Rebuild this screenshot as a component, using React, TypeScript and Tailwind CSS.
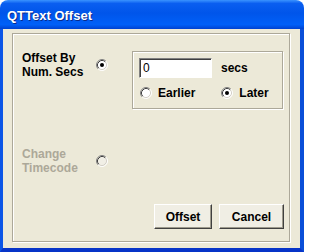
import React from "react";

function Radio({ checked, disabled }: { checked?: boolean; disabled?: boolean }) {
  return (
    <svg width="12" height="12" viewBox="0 0 12 12" className="block shrink-0">
      <circle cx="6" cy="6" r="5" fill={disabled ? "#F1EFE6" : "#ffffff"} />
      <path d="M2.11 9.89 A5.5 5.5 0 0 1 9.89 2.11" fill="none" stroke="#808080" strokeWidth="1" />
      <path d="M2.82 9.18 A4.5 4.5 0 0 1 9.18 2.82" fill="none" stroke="#404040" strokeWidth="1" />
      <path d="M9.89 2.11 A5.5 5.5 0 0 1 2.11 9.89" fill="none" stroke="#ffffff" strokeWidth="1" />
      <path d="M9.18 2.82 A4.5 4.5 0 0 1 2.82 9.18" fill="none" stroke="#D4D0C8" strokeWidth="1" />
      {checked && <circle cx="6" cy="6" r="2" fill="#000" />}
    </svg>
  );
}

function XpButton({ label, width }: { label: string; width: string }) {
  return (
    <button
      className={`${width} h-[25px] bg-[#F0EEE4] border border-t-white border-l-white border-r-[#404040] border-b-[#404040] shadow-[inset_-1px_-1px_0_#9D9A8C] text-[12px] font-bold text-black leading-none`}
    >
      {label}
    </button>
  );
}

export default function App() {
  return (
    <div className="w-[304px] h-[252px] bg-white flex flex-col font-['Liberation_Sans',Arial,sans-serif] select-none">
      {/* title bar */}
      <div className="h-[29px] shrink-0 rounded-t-[8px] bg-[linear-gradient(to_bottom,#3A93FF_0%,#0A5EF0_12%,#0055EA_45%,#0060F8_85%,#0042D0_100%)] flex items-center pl-[7px] pt-[2px]">
        <span className="text-white text-[13px] font-bold leading-none [text-shadow:1px_1px_0_#0A2A8A]">
          QTText Offset
        </span>
      </div>

      {/* client area */}
      <div className="flex-1 bg-[#ECE9D8] border-l-[3px] border-r-[4px] border-b-[4px] border-l-[#0B55E6] border-r-[#0A4FD8] border-b-[#0734C8] pl-[9px] pr-[9px] pt-[4px]">
        <div className="w-[278px] h-[209px] border border-[#ACA899] shadow-[1px_1px_0_#ffffff,inset_1px_1px_0_#ffffff] flex flex-col">
          {/* row 1 */}
          <div className="flex items-start mt-[17px] pl-[9px]">
            <div className="w-[74px] text-[12px] font-bold leading-[14px] text-black">
              Offset By
              <br />
              Num. Secs
            </div>
            <div className="mt-[8px]">
              <Radio checked />
            </div>
            <div className="ml-[24px] w-[151px] h-[58px] border border-[#ACA899] shadow-[1px_1px_0_#ffffff,inset_1px_1px_0_#ffffff] pl-[6px] pt-[6px] flex flex-col">
              <div className="flex items-center">
                <div className="w-[73px] h-[20px] bg-white border border-t-[#808080] border-l-[#808080] border-b-white border-r-white shadow-[inset_1px_1px_0_#404040] pl-[3px] flex items-center text-[12px] text-black">
                  0
                </div>
                <span className="ml-[9px] text-[12px] font-bold text-black leading-none">secs</span>
              </div>
              <div className="flex items-center mt-[9px] pl-[1px]">
                <Radio />
                <span className="ml-[6px] text-[12px] font-bold text-black leading-none">Earlier</span>
                <div className="ml-[26px]">
                  <Radio checked />
                </div>
                <span className="ml-[6px] text-[12px] font-bold text-black leading-none">Later</span>
              </div>
            </div>
          </div>

          {/* row 2 */}
          <div className="flex items-start mt-[38px] pl-[9px]">
            <div className="w-[74px] text-[12px] font-bold leading-[14px] text-[#ACA899]">
              Change
              <br />
              Timecode
            </div>
            <div className="mt-[8px]">
              <Radio disabled />
            </div>
          </div>

          {/* buttons */}
          <div className="flex justify-end gap-[7px] mt-[29px] pr-[5px]">
            <XpButton label="Offset" width="w-[58px]" />
            <XpButton label="Cancel" width="w-[65px]" />
          </div>
        </div>
      </div>
    </div>
  );
}
